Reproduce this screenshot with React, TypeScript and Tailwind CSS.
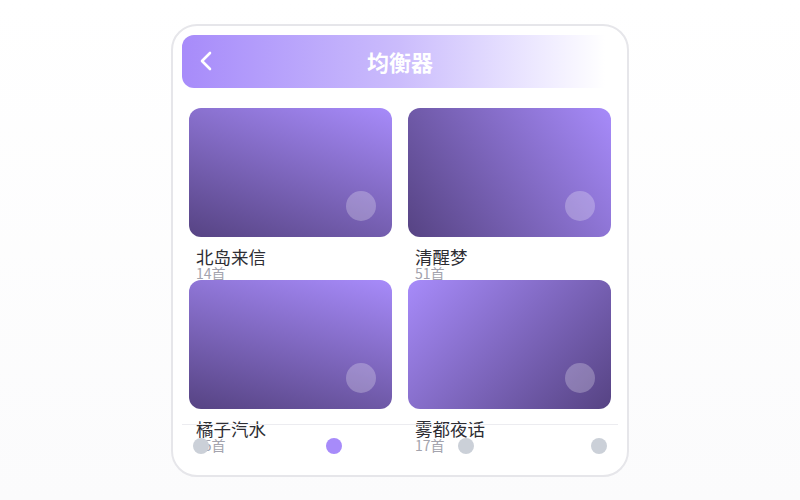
const playlists = [
  { name: "北岛来信", count: "14首", bg: "bg-[linear-gradient(200deg,#a78bfa,#564383)]" },
  { name: "清醒梦", count: "51首", bg: "bg-[linear-gradient(235deg,#a78bfa,#564383)]" },
  { name: "橘子汽水", count: "15首", bg: "bg-[linear-gradient(195deg,#a78bfa,#564383)]" },
  { name: "雾都夜话", count: "17首", bg: "bg-[linear-gradient(135deg,#a78bfa,#564383)]" },
];

function ChevronLeft() {
  return (
    <svg width="14" height="20" viewBox="0 0 14 20" fill="none">
      <path d="M11 2 L3 10 L11 18" stroke="white" strokeWidth="2.6" strokeLinecap="round" strokeLinejoin="round" />
    </svg>
  );
}

export default function App() {
  return (
    <div className="w-[800px] h-[500px] flex items-center justify-center bg-linear-to-b from-white to-[#fbfbfc] font-['Noto_Sans_CJK_SC','Noto_Sans',sans-serif]">
      <div className="w-[458px] h-[453px] flex flex-col p-[9px] bg-white border-2 border-[#e6e6ea] rounded-[26px]">
        <header className="h-[53px] shrink-0 flex items-center rounded-[12px] bg-linear-to-r from-[#a78bfa] via-[#cbbcfc] via-50% to-white to-97%">
          <button className="w-[48px] flex justify-center">
            <ChevronLeft />
          </button>
          <h1 className="flex-1 text-center text-white text-[22px] font-bold leading-none">均衡器</h1>
          <div className="w-[48px]" />
        </header>

        <main className="mt-[20px] h-[316px] shrink-0 px-[7px]">
          <div className="grid grid-cols-2 gap-x-[16px] auto-rows-[172px]">
            {playlists.map((p) => (
              <div key={p.name} className="flex flex-col">
                <div className={`h-[129px] shrink-0 rounded-[12px] flex items-end justify-end p-[16px] ${p.bg}`}>
                  <div className="w-[30px] h-[30px] rounded-full bg-white/25" />
                </div>
                <div className="mt-[11px] pl-[7px] text-[17.5px] leading-[18px] text-[#2d2d33]">{p.name}</div>
                <div className="pl-[7px] text-[14px] leading-[14px] text-[#a3a3ad]">{p.count}</div>
              </div>
            ))}
          </div>
        </main>

        <nav className="flex-1 border-t border-[#ececf0] flex justify-between items-start pt-[13px] px-[11px]">
          <span className="w-[16px] h-[16px] rounded-full bg-[#cbd0d8]" />
          <span className="w-[16px] h-[16px] rounded-full bg-[#a78bfa]" />
          <span className="w-[16px] h-[16px] rounded-full bg-[#cbd0d8]" />
          <span className="w-[16px] h-[16px] rounded-full bg-[#cbd0d8]" />
        </nav>
      </div>
    </div>
  );
}
